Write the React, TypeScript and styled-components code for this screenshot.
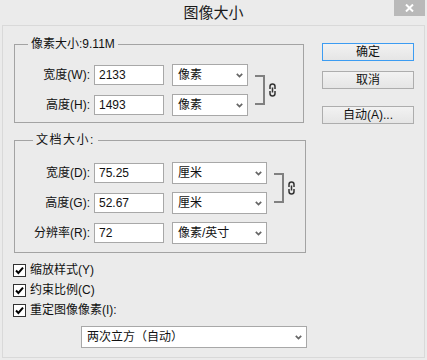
import React from 'react';
import styled, { createGlobalStyle } from 'styled-components';

const GlobalStyle = createGlobalStyle`
  html, body {
    margin: 0;
    padding: 0;
    background: #ebebeb;
  }
  body {
    font-family: "Liberation Sans", "Noto Sans CJK SC", sans-serif;
    font-size: 12px;
    color: #111;
  }
`;

const Window = styled.div`
  width: 427px;
  height: 360px;
  background: #ebebeb;
  overflow: hidden;
`;

const TitleBar = styled.div`
  height: 25px;
  display: grid;
  grid-template-columns: 1fr auto 1fr;
`;

const Title = styled.div`
  grid-column: 2;
  font-family: "Noto Sans CJK SC", sans-serif;
  font-size: 15px;
  line-height: 24px;
  color: #1a1a1a;
`;

const CloseButton = styled.div`
  grid-column: 3;
  justify-self: end;
  align-self: start;
  width: 31px;
  height: 16px;
  margin-right: 2px;
  background: #b9b9b9;
  display: flex;
  align-items: center;
  justify-content: center;
`;

const Client = styled.div`
  margin: 0 2px;
  height: 333px;
  box-sizing: border-box;
  border: 1px solid #d9d9d9;
  padding: 10px 0 0 10px;
  display: flex;
  gap: 16px;
`;

const LeftColumn = styled.div`
  width: 293px;
  display: flex;
  flex-direction: column;
`;

const Group = styled.fieldset<{ $width: number; $padBottom: number; $top?: number }>`
  margin: ${p => p.$top ?? 0}px 0 0 1px;
  padding: 0 0 ${p => p.$padBottom}px 0;
  width: ${p => p.$width}px;
  box-sizing: border-box;
  border: 1px solid #a3a3a3;
  min-inline-size: 0;
`;

const Legend = styled.legend<{ $offset: number; $spacing?: number }>`
  margin-left: ${p => p.$offset}px;
  padding: 0 3px;
  height: 16px;
  line-height: 16px;
  letter-spacing: ${p => p.$spacing ?? 0}px;
  white-space: nowrap;
`;

const FieldGrid = styled.div<{ $padTop: number }>`
  display: grid;
  grid-template-columns: 75px auto auto auto auto;
  grid-auto-rows: 22px;
  row-gap: 8px;
  justify-content: start;
  padding-top: ${p => p.$padTop}px;
`;

const FieldLabel = styled.div`
  grid-column: 1;
  text-align: right;
  line-height: 22px;
  white-space: nowrap;
`;

const TextBox = styled.input`
  grid-column: 2;
  align-self: center;
  width: 70px;
  height: 20px;
  margin: 0 0 0 4px;
  padding: 0 4px;
  box-sizing: border-box;
  border: 1px solid #a8a8a8;
  background: #fff;
  font: 12px "Liberation Sans", "Noto Sans CJK SC", sans-serif;
  color: #111;
  outline: none;
`;

const Dropdown = styled.div<{ $width: number }>`
  width: ${p => p.$width}px;
  height: 22px;
  box-sizing: border-box;
  border: 1px solid #a8a8a8;
  background: #fff;
  padding: 0 4px 0 5px;
  display: flex;
  align-items: center;
  justify-content: space-between;
  line-height: 20px;
  white-space: nowrap;
`;

const FieldDropdown = styled(Dropdown)`
  grid-column: 3;
  margin-left: 8px;
`;

const Bracket = styled.div`
  grid-column: 4;
  grid-row: 1 / span 2;
  width: 10px;
  margin: 11px 0 11px 7px;
  box-sizing: border-box;
  border: 2px solid #808080;
  border-left: none;
`;

const Chain = styled.div`
  grid-column: 5;
  grid-row: 1 / span 2;
  align-self: center;
  margin-left: 4px;
  display: flex;
`;

const Options = styled.div`
  margin-top: 7px;
  display: flex;
  flex-direction: column;
`;

const OptionRow = styled.label`
  height: 20px;
  display: flex;
  align-items: center;
  gap: 4px;
  line-height: 20px;
`;

const CheckBox = styled.span`
  width: 13px;
  height: 13px;
  box-sizing: border-box;
  border: 1px solid #333;
  background: #fff;
  display: flex;
  align-items: center;
  justify-content: center;
`;

const ResampleDropdown = styled(Dropdown)`
  margin: 6px 0 0 68px;
`;

const RightColumn = styled.div`
  margin-top: 7px;
  display: flex;
  flex-direction: column;
`;

const Button = styled.div<{ $default?: boolean; $gapBefore?: number }>`
  width: 92px;
  height: 18px;
  margin-top: ${p => p.$gapBefore ?? 0}px;
  box-sizing: border-box;
  border: 1px solid ${p => (p.$default ? '#3c9cf2' : '#adadad')};
  background: linear-gradient(#f2f2f2, #e5e5e5);
  display: flex;
  align-items: center;
  justify-content: center;
  line-height: 16px;
`;

const Chevron = () => (
  <svg width="7" height="5" viewBox="0 0 7 5">
    <path d="M0.8 0.8 L3.5 3.6 L6.2 0.8" fill="none" stroke="#666" strokeWidth="1.7" />
  </svg>
);

const ChainIcon = () => (
  <svg width="7" height="14" viewBox="0 0 7 14">
    <path
      d="M1 6 V3.5 A2.5 2.5 0 0 1 6 3.5 V6 M1 8 V10.5 A2.5 2.5 0 0 0 6 10.5 V8 M3.5 4.5 V9.5"
      fill="none"
      stroke="#333"
      strokeWidth="1.5"
    />
  </svg>
);

const Check = () => (
  <svg width="9" height="9" viewBox="0 0 9 9">
    <path d="M1 4.5 L3.4 7 L8 1.6" fill="none" stroke="#000" strokeWidth="2" />
  </svg>
);

const pixelRows = [
  { label: '宽度(W):', value: '2133', unit: '像素' },
  { label: '高度(H):', value: '1493', unit: '像素' },
];

const docRows = [
  { label: '宽度(D):', value: '75.25', unit: '厘米' },
  { label: '高度(G):', value: '52.67', unit: '厘米' },
  { label: '分辨率(R):', value: '72', unit: '像素/英寸' },
];

const options = ['缩放样式(Y)', '约束比例(C)', '重定图像像素(I):'];

const App: React.FC = () => {
  return (
    <Window>
      <GlobalStyle />
      <TitleBar>
        <Title>图像大小</Title>
        <CloseButton>
          <svg width="9" height="8" viewBox="0 0 9 8">
            <path d="M1 0.5 L8 7.5 M8 0.5 L1 7.5" stroke="#fff" strokeWidth="2" />
          </svg>
        </CloseButton>
      </TitleBar>
      <Client>
        <LeftColumn>
          <Group $width={290} $padBottom={6}>
            <Legend $offset={13}>像素大小:9.11M</Legend>
            <FieldGrid $padTop={12}>
              {pixelRows.map((row, i) => (
                <React.Fragment key={i}>
                  <FieldLabel style={{ gridRow: i + 1 }}>{row.label}</FieldLabel>
                  <TextBox style={{ gridRow: i + 1 }} defaultValue={row.value} readOnly />
                  <FieldDropdown style={{ gridRow: i + 1 }} $width={76}>
                    {row.unit}
                    <Chevron />
                  </FieldDropdown>
                </React.Fragment>
              ))}
              <Bracket />
              <Chain>
                <ChainIcon />
              </Chain>
            </FieldGrid>
          </Group>
          <Group $width={292} $padBottom={8} $top={9}>
            <Legend $offset={18} $spacing={1.5}>文档大小:</Legend>
            <FieldGrid $padTop={14}>
              {docRows.map((row, i) => (
                <React.Fragment key={i}>
                  <FieldLabel style={{ gridRow: i + 1 }}>{row.label}</FieldLabel>
                  <TextBox style={{ gridRow: i + 1 }} defaultValue={row.value} readOnly />
                  <FieldDropdown style={{ gridRow: i + 1 }} $width={95}>
                    {row.unit}
                    <Chevron />
                  </FieldDropdown>
                </React.Fragment>
              ))}
              <Bracket />
              <Chain>
                <ChainIcon />
              </Chain>
            </FieldGrid>
          </Group>
          <Options>
            {options.map(text => (
              <OptionRow key={text}>
                <CheckBox>
                  <Check />
                </CheckBox>
                {text}
              </OptionRow>
            ))}
          </Options>
          <ResampleDropdown $width={226}>
            两次立方（自动）
            <Chevron />
          </ResampleDropdown>
        </LeftColumn>
        <RightColumn>
          <Button $default>确定</Button>
          <Button $gapBefore={10}>取消</Button>
          <Button $gapBefore={17}>自动(A)...</Button>
        </RightColumn>
      </Client>
    </Window>
  );
};

export default App;
